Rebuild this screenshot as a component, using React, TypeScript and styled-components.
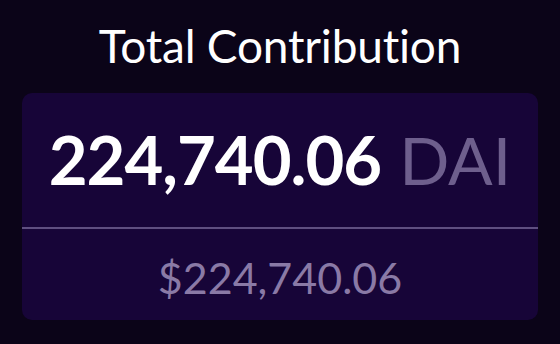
import React from "react";
import styled, { createGlobalStyle } from "styled-components";

const GlobalStyle = createGlobalStyle`
  html, body {
    margin: 0;
    padding: 0;
    background: #0b0418;
  }
  body {
    font-family: Lato, "Noto Sans", sans-serif;
  }
`;

const Page = styled.div`
  width: 560px;
  height: 344px;
  box-sizing: border-box;
  padding: 21px 22px 24px;
  display: flex;
  flex-direction: column;
  align-items: center;
`;

const Title = styled.h1`
  margin: 0;
  height: 72px;
  font-size: 46px;
  font-weight: 400;
  line-height: 50px;
  color: #ffffff;
  letter-spacing: -0.2px;
`;

const Card = styled.div`
  width: 100%;
  flex: 1;
  display: flex;
  flex-direction: column;
  background: #170538;
  border-radius: 10px;
  overflow: hidden;
`;

const AmountRow = styled.div`
  height: 136px;
  display: flex;
  align-items: center;
  justify-content: center;
  gap: 18px;
  border-bottom: 2px solid #5f4f80;
  box-sizing: border-box;
  padding-bottom: 2px;
`;

const Amount = styled.span`
  font-size: 67px;
  font-weight: 700;
  color: #ffffff;
  letter-spacing: -1px;
`;

const Token = styled.span<{ muted?: boolean }>`
  font-size: 66px;
  font-weight: 400;
  color: ${(p) => (p.muted ? "#6e5f8d" : "#ffffff")};
`;

const Fiat = styled.div`
  flex: 1;
  display: flex;
  align-items: center;
  justify-content: center;
  font-size: 43px;
  font-weight: 400;
  color: #8a7aa6;
  padding-top: 6px;
`;

const App: React.FC = () => {
  return (
    <>
      <GlobalStyle />
      <Page>
        <Title>Total Contribution</Title>
        <Card>
          <AmountRow>
            <Amount>224,740.06</Amount>
            <Token muted>DAI</Token>
          </AmountRow>
          <Fiat>$224,740.06</Fiat>
        </Card>
      </Page>
    </>
  );
};

export default App;
